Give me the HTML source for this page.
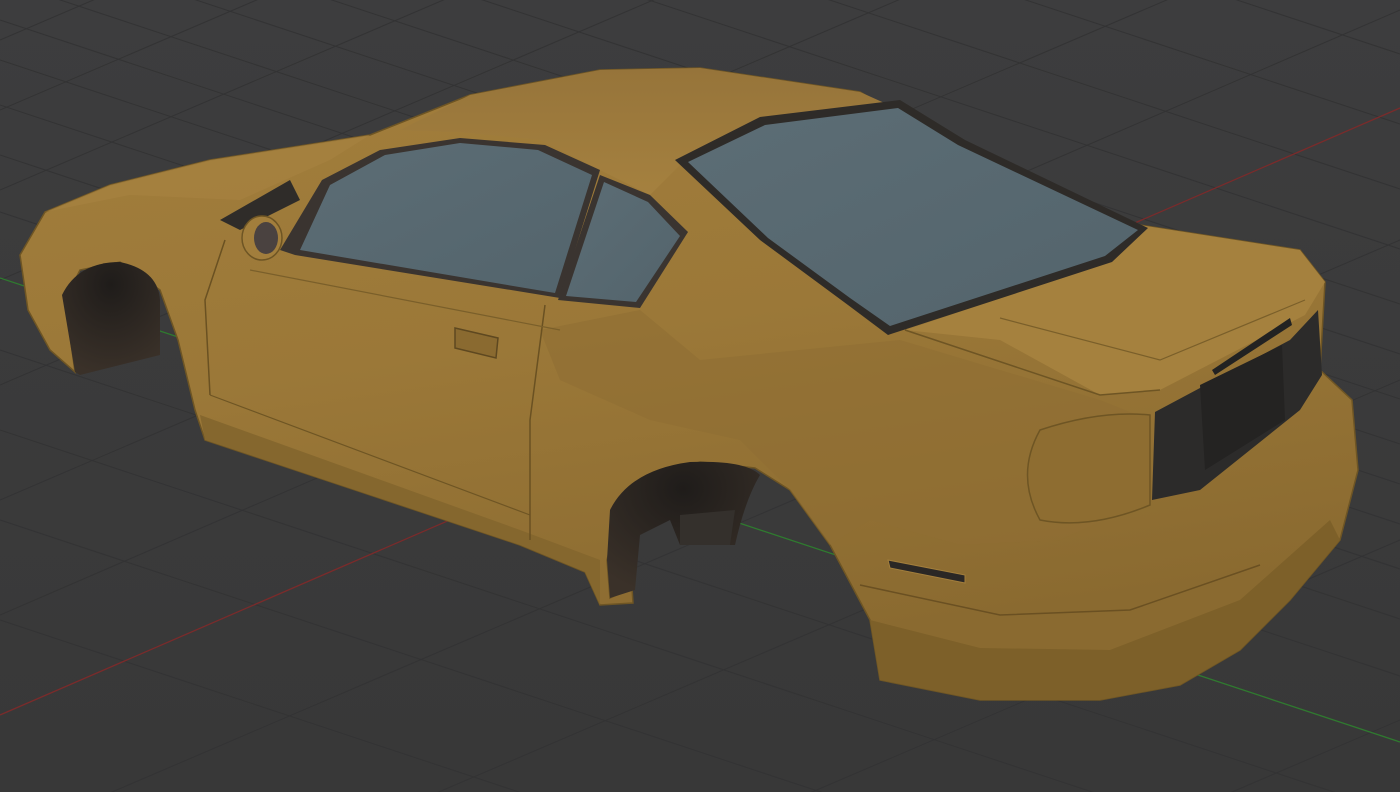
<!DOCTYPE html>
<html><head><style>html,body{margin:0;padding:0;background:#3b3b3c;overflow:hidden;width:1400px;height:792px;position:relative}svg{display:block;position:absolute;left:0;top:0}</style></head>
<body>
<svg width="1400" height="792" viewBox="0 0 1400 792" xmlns="http://www.w3.org/2000/svg">
<defs>
<linearGradient id="bg" x1="0" y1="0" x2="0" y2="1"><stop offset="0" stop-color="#3d3d3e"/><stop offset="1" stop-color="#383838"/></linearGradient>
<linearGradient id="body" x1="0" y1="0" x2="0.3" y2="1"><stop offset="0" stop-color="#a27e3c"/><stop offset="0.5" stop-color="#9b7838"/><stop offset="1" stop-color="#8a6a30"/></linearGradient>
<linearGradient id="roof" x1="0" y1="0" x2="0" y2="1"><stop offset="0" stop-color="#96743a"/><stop offset="1" stop-color="#a5813f"/></linearGradient>
<linearGradient id="glass" x1="0" y1="0" x2="1" y2="1"><stop offset="0" stop-color="#5c6d75"/><stop offset="1" stop-color="#53646c"/></linearGradient>
<radialGradient id="arch" cx="0.5" cy="0.2" r="0.8"><stop offset="0" stop-color="#1f1c1a"/><stop offset="1" stop-color="#3a3129"/></radialGradient>
</defs>
<rect width="1400" height="792" fill="url(#bg)"/>
<g stroke="#333334" stroke-width="1" fill="none">
<path d="M0 40 L1400 -560 M0 110 L1400 -490 M0 190 L1400 -410 M0 280 L1400 -320 M0 385 L1400 -215 M0 500 L1400 -100 M0 615 L1400 10 M0 840 L1400 240 M0 980 L1400 380 M0 1140 L1400 540 M0 1320 L1400 720"/>
<path d="M0 20 L1400 484 M0 60 L1400 524 M0 105 L1400 569 M0 155 L1400 619 M0 212 L1400 676 M0 350 L1400 814 M0 430 L1400 894 M0 520 L1400 984 M0 620 L1400 1084 M0 -20 L1400 444 M0 -65 L1400 399 M0 -110 L1400 354 M0 -160 L1400 304 M0 -215 L1400 249 M0 -275 L1400 189 M0 -340 L1400 124 M0 -410 L1400 54"/>
</g>
<line x1="0" y1="715" x2="1400" y2="108" stroke="#7a2b2b" stroke-width="1.3"/>
<line x1="0" y1="278" x2="1400" y2="742" stroke="#2f7a2f" stroke-width="1.3"/>
<path d="M1080 690 L1180 680 L1270 610 L1300 560 L1240 640 L1150 690 Z" fill="#252422"/>
<path d="M20 255 L45 212 L110 185 L210 160 L370 135 L470 95 L600 70 L700 68 L860 92 L960 150 L1140 225 L1300 250 L1325 282 L1320 370 L1352 400 L1358 470 L1340 540 L1290 600 L1240 650 L1180 685 L1100 700 L980 700 L880 680 L870 620 L830 545 L790 490 L755 468 L700 462 L650 478 L620 510 L607 560 L610 598 L632 588 L633 603 L600 605 L585 572 L520 545 L205 440 L195 410 L178 340 L160 290 L120 262 L80 270 L65 300 L75 372 L50 350 L28 310 Z" fill="url(#body)" stroke="#6e5524" stroke-width="1.5"/>
<path d="M400 130 L470 95 L600 70 L700 68 L860 92 L900 110 L760 120 L685 160 L650 195 L600 170 L540 140 L460 132 Z" fill="url(#roof)"/>
<path d="M45 212 L110 185 L210 160 L370 135 L330 160 L240 200 L130 195 Z" fill="#a58140" opacity="0.8"/>
<path d="M1140 225 L1300 250 L1325 282 L1305 315 L1160 390 L1100 395 L1000 340 L905 330 L1110 262 Z" fill="#a5813e"/>
<path d="M905 330 L1100 395 L1160 390" stroke="#6e5524" stroke-width="1.5" fill="none"/>
<path d="M1000 318 L1160 360 L1305 300" stroke="#7a5f2a" stroke-width="1.2" fill="none"/>
<path d="M640 310 L700 360 L900 340 L1100 400 L1150 420 L1150 500 L1060 540 L960 545 L870 520 L830 545 L790 490 L740 440 L650 420 L560 380 L540 330 Z" fill="#8f6e33" opacity="0.6"/>
<path d="M870 620 L980 648 L1110 650 L1240 600 L1330 520 L1340 540 L1290 600 L1240 650 L1180 685 L1100 700 L980 700 L880 680 Z" fill="#7d6029"/>
<path d="M860 585 L1000 615 L1130 610 L1260 565" stroke="#6a5022" stroke-width="1.5" fill="none"/>
<path d="M200 415 L520 530 L600 560 L600 605 L585 572 L520 545 L205 440 Z" fill="#85672e"/>
<path d="M210 395 L530 515" stroke="#6e5524" stroke-width="1.2" fill="none"/>
<path d="M225 240 L205 300 L210 395 M545 305 L530 420 L530 540" stroke="#6a5122" stroke-width="1.5" fill="none"/>
<path d="M250 270 L560 330" stroke="#7a5f2a" stroke-width="1.2" fill="none"/>
<path d="M455 328 L498 338 L496 358 L455 348 Z" fill="#8a6a30" stroke="#5e4820" stroke-width="1.5"/>
<path d="M280 250 L322 180 L380 150 L460 138 L545 145 L600 170 L560 298 L295 255 Z" fill="#3a3430"/>
<path d="M300 250 L330 185 L385 155 L460 143 L538 150 L592 175 L555 293 Z" fill="url(#glass)"/>
<path d="M558 300 L600 175 L650 195 L688 232 L640 308 Z" fill="#3a3430"/>
<path d="M566 296 L604 182 L648 202 L680 236 L636 302 Z" fill="url(#glass)"/>
<path d="M675 160 L760 117 L900 100 L965 140 L1148 228 L1112 262 L888 335 L848 305 L760 240 Z" fill="#2e2b28"/>
<path d="M688 162 L765 125 L898 108 L958 145 L1138 230 L1105 256 L890 326 L850 298 L768 238 Z" fill="url(#glass)"/>
<path d="M220 220 L290 180 L300 200 L240 230 Z" fill="#2f2c29"/>
<ellipse cx="262" cy="238" rx="20" ry="22" fill="#a27e3c" stroke="#6e5524" stroke-width="1.5"/>
<ellipse cx="266" cy="238" rx="12" ry="16" fill="#4a4240"/>
<path d="M62 295 Q78 262 120 262 Q158 270 160 300 L160 355 L80 375 L75 372 Z" fill="url(#arch)"/>
<path d="M610 510 Q630 470 690 462 Q745 460 760 475 Q745 500 735 545 L680 545 L670 520 L640 535 L635 590 L610 598 L607 560 Z" fill="url(#arch)"/>
<path d="M680 515 L735 510 L730 545 L680 545 Z" fill="#34302c"/>
<path d="M1155 412 L1290 340 L1318 310 L1322 375 L1300 410 L1200 490 L1152 500 Z" fill="#2c2b2a"/>
<path d="M1200 385 L1282 345 L1285 420 L1205 470 Z" fill="#242322"/>
<path d="M1212 370 L1290 318 L1292 325 L1215 375 Z" fill="#222"/>
<path d="M1040 430 Q1100 410 1150 415 L1150 505 Q1090 530 1040 520 Q1015 475 1040 430 Z" fill="#8e6d31" stroke="#6e5524" stroke-width="1.5"/>
<path d="M888 560 L965 575 L965 583 L890 568 Z" fill="#2a2725" stroke="#a27e3c" stroke-width="1"/>
</svg>
</body></html>
